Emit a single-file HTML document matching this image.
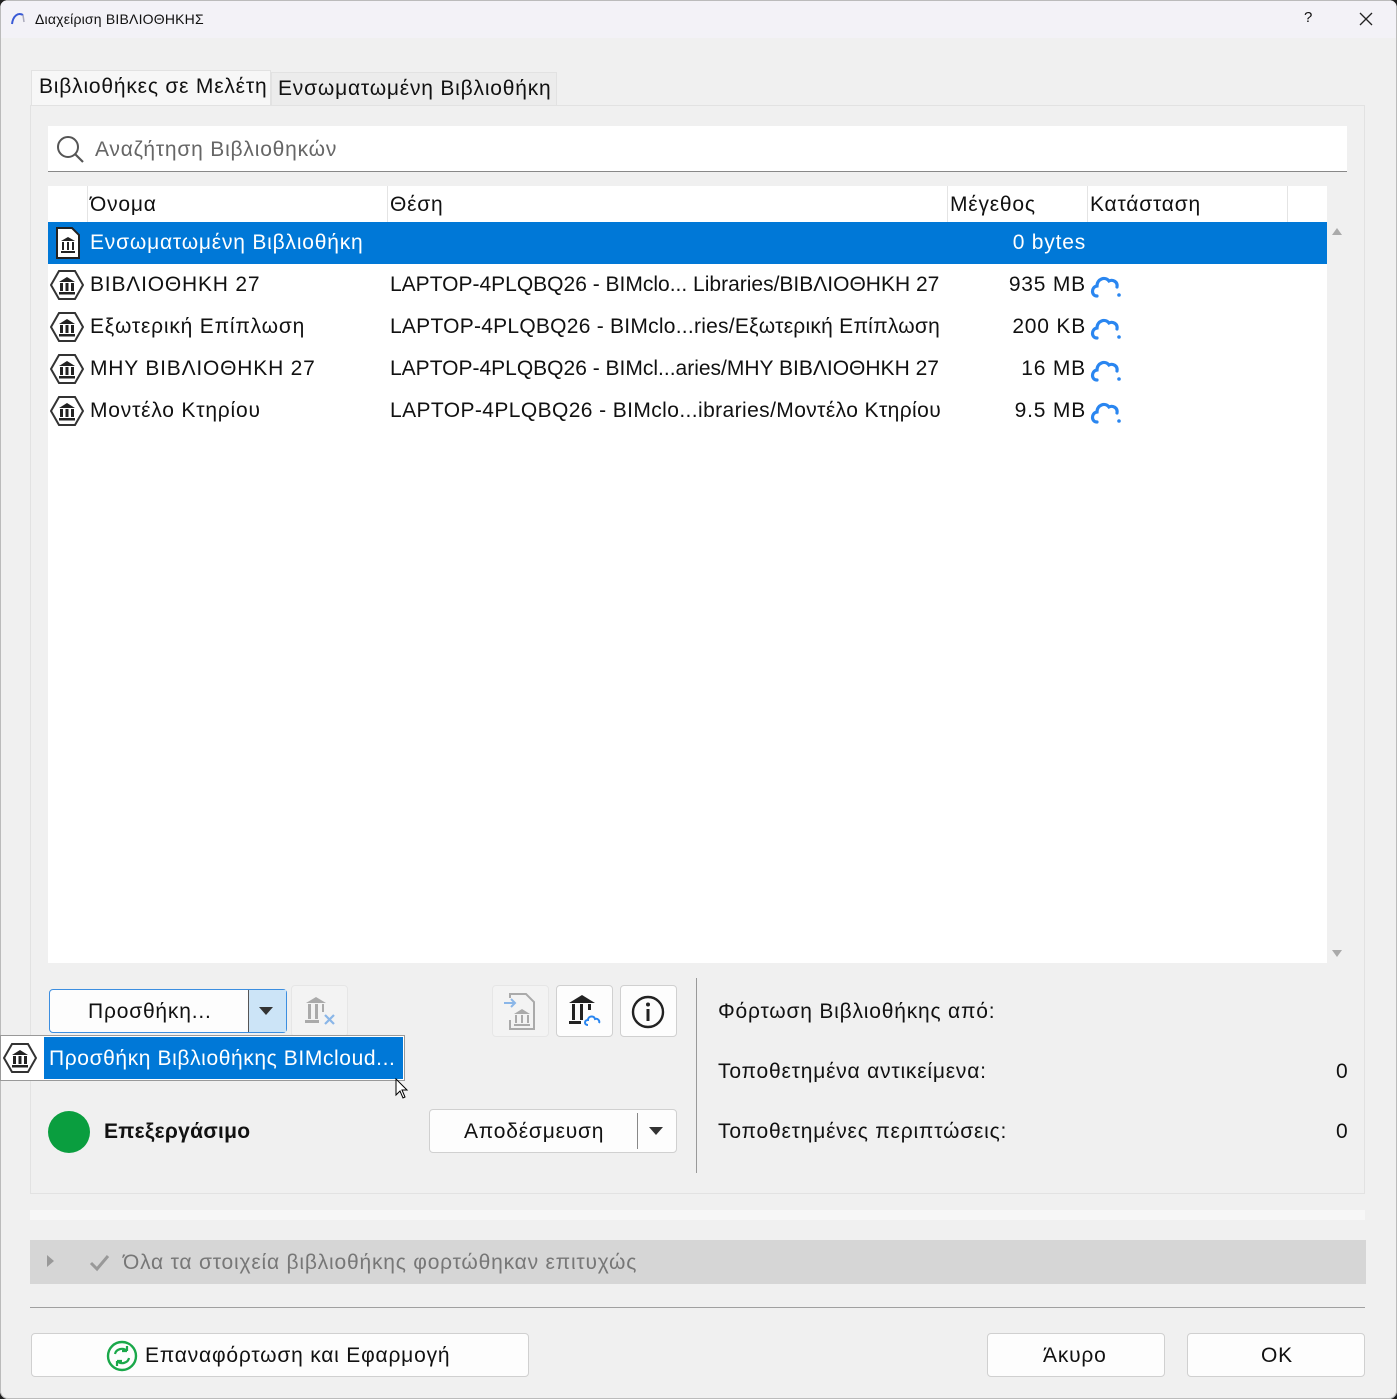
<!DOCTYPE html>
<html><head><meta charset="utf-8"><style>
*{margin:0;padding:0;box-sizing:border-box}
body{width:1397px;height:1399px;background:#202020;font-family:"Liberation Sans","DejaVu Sans",sans-serif;color:#111;position:relative;overflow:hidden}
.win{position:absolute;left:0;top:0;width:1397px;height:1399px;background:#f0f0f0;border-radius:8px;overflow:hidden;box-shadow:inset 0 0 0 1px #bbb}
.a{position:absolute;white-space:nowrap}
.t21{font-size:21px;letter-spacing:0.8px}
.btn{position:absolute;background:#fdfdfd;border:1px solid #d0d0d0;border-radius:4px}
.row{position:absolute;left:48px;width:1279px;height:42px;font-size:21px}
.row span{position:absolute;top:9px;letter-spacing:0.8px}
.row span.p{letter-spacing:0}
</style></head><body><div class="win">
<div class="a" style="left:1px;top:1px;width:1395px;height:37px;background:#f3f2f7"></div>
<svg class="a" style="left:10px;top:10px" width="16" height="16"><path d="M2 14 C3 6,8 2,13 5" stroke="#3a5bd6" stroke-width="2" fill="none"/><path d="M13 5 L14 12" stroke="#aab" stroke-width="1.5"/></svg>
<div class="a" style="left:35px;top:11px;font-size:14px;letter-spacing:0.2px">Διαχείριση ΒΙΒΛΙΟΘΗΚΗΣ</div>
<div class="a" style="left:1304px;top:9px;font-size:15px">?</div>
<svg class="a" style="left:1359px;top:12px" width="14" height="14"><path d="M1 1L13 13M13 1L1 13" stroke="#222" stroke-width="1.3"/></svg>
<div class="a" style="left:31px;top:70px;width:240px;height:36px;background:#f7f7f7;border:1px solid #e2e2e2;border-bottom:none"></div>
<div class="a t21" style="left:39px;top:75px">Βιβλιοθήκες σε Μελέτη</div>
<div class="a" style="left:271px;top:72px;width:286px;height:33px;background:#ececec;border:1px solid #e2e2e2;border-bottom:none"></div>
<div class="a t21" style="left:278px;top:77px">Ενσωματωμένη Βιβλιοθήκη</div>
<div class="a" style="left:30px;top:105px;width:1335px;height:1089px;border:1px solid #e2e2e2;background:#f0f0f0"></div>
<div class="a" style="left:48px;top:126px;width:1299px;height:46px;background:#fff;border-bottom:1px solid #888"></div>
<svg class="a" style="left:56px;top:135px" width="30" height="30"><circle cx="12" cy="12" r="10" stroke="#555" stroke-width="2" fill="none"/><path d="M19 19L27 27" stroke="#555" stroke-width="2.2"/></svg>
<div class="a t21" style="left:95px;top:138px;color:#666">Αναζήτηση Βιβλιοθηκών</div>
<div class="a" style="left:48px;top:186px;width:1279px;height:777px;background:#fff"></div>
<div class="a" style="left:1327px;top:186px;width:20px;height:777px;background:#f0f0f0"></div>
<div class="a" style="left:1332px;top:228px;border:5px solid transparent;border-bottom:7px solid #aaa;border-top:none;width:0"></div>
<div class="a" style="left:1332px;top:950px;border:5px solid transparent;border-top:7px solid #aaa;border-bottom:none;width:0"></div>
<div class="a" style="left:87px;top:186px;width:1px;height:36px;background:#e4e4e4"></div>
<div class="a" style="left:387px;top:186px;width:1px;height:36px;background:#e4e4e4"></div>
<div class="a" style="left:947px;top:186px;width:1px;height:36px;background:#e4e4e4"></div>
<div class="a" style="left:1087px;top:186px;width:1px;height:36px;background:#e4e4e4"></div>
<div class="a" style="left:1287px;top:186px;width:1px;height:36px;background:#e4e4e4"></div>
<div class="a t21" style="left:90px;top:193px">Όνομα</div>
<div class="a t21" style="left:390px;top:193px">Θέση</div>
<div class="a t21" style="left:950px;top:193px">Μέγεθος</div>
<div class="a t21" style="left:1090px;top:193px">Κατάσταση</div>

<div class="row" style="top:222px;background:#0078d7;color:#fff">
<svg class="a" style="left:7px;top:5px" width="26" height="32"><path d="M2 1H17L24 8V31H2Z" fill="#fff" stroke="#222" stroke-width="2"/><path d="M6 14L13 10L20 14ZM7 15h2v8H7zM12 15h2v8h-2zM17 15h2v8h-2zM6 24h14v2H6z" fill="#222"/></svg>
<span style="left:42px">Ενσωματωμένη Βιβλιοθήκη</span><span style="right:241px">0 bytes</span></div>

<svg width="0" height="0" style="position:absolute"><defs>
<symbol id="hx" viewBox="0 0 34 32"><path d="M9 2H25L33 16L25 30H9L1 16Z" fill="none" stroke="#333" stroke-width="2"/><path d="M9 13L17 8L25 13ZM10 14h3v8h-3zM15.5 14h3v8h-3zM21 14h3v8h-3zM9 23h16v2.5H9z" fill="#222"/></symbol>
<symbol id="cl" viewBox="0 0 34 28"><path d="M8 24C2 24 2 15 8 14C8 7 16 4 20 9C24 7 29 10 28 15" fill="none" stroke="#2a86f0" stroke-width="3.2" stroke-linecap="round"/><circle cx="30" cy="23" r="1.8" fill="#2a86f0"/></symbol>
</defs></svg>

<div class="row" style="top:264px"><svg class="a" style="left:2px;top:5px" width="34" height="32"><use href="#hx"/></svg><span style="left:42px">ΒΙΒΛΙΟΘΗΚΗ 27</span><span class="p" style="left:342px">LAPTOP-4PLQBQ26 - BIMclo... Libraries/ΒΙΒΛΙΟΘΗΚΗ 27</span><span style="right:241px">935 MB</span><svg class="a" style="left:1040px;top:8px" width="36" height="28"><use href="#cl"/></svg></div>
<div class="row" style="top:306px"><svg class="a" style="left:2px;top:5px" width="34" height="32"><use href="#hx"/></svg><span style="left:42px">Εξωτερική Επίπλωση</span><span class="p" style="left:342px;letter-spacing:0.25px">LAPTOP-4PLQBQ26 - BIMclo...ries/Εξωτερική Επίπλωση</span><span style="right:241px">200 KB</span><svg class="a" style="left:1040px;top:8px" width="36" height="28"><use href="#cl"/></svg></div>
<div class="row" style="top:348px"><svg class="a" style="left:2px;top:5px" width="34" height="32"><use href="#hx"/></svg><span style="left:42px">ΜΗΥ ΒΙΒΛΙΟΘΗΚΗ 27</span><span class="p" style="left:342px">LAPTOP-4PLQBQ26 - BIMcl...aries/ΜΗΥ ΒΙΒΛΙΟΘΗΚΗ 27</span><span style="right:241px">16 MB</span><svg class="a" style="left:1040px;top:8px" width="36" height="28"><use href="#cl"/></svg></div>
<div class="row" style="top:390px"><svg class="a" style="left:2px;top:5px" width="34" height="32"><use href="#hx"/></svg><span style="left:42px">Μοντέλο Κτηρίου</span><span class="p" style="left:342px;letter-spacing:0.4px">LAPTOP-4PLQBQ26 - BIMclo...ibraries/Μοντέλο Κτηρίου</span><span style="right:241px">9.5 MB</span><svg class="a" style="left:1040px;top:8px" width="36" height="28"><use href="#cl"/></svg></div>

<div class="btn" style="left:49px;top:989px;width:238px;height:44px;border-color:#3c8ee0"></div>
<div class="a" style="left:248px;top:990px;width:38px;height:42px;background:#cce4f7;border-left:1px solid #555"></div>
<div class="a" style="left:259px;top:1007px;border:7px solid transparent;border-top:8px solid #333;border-bottom:none;width:0"></div>
<div class="a t21" style="left:88px;top:1000px">Προσθήκη...</div>
<div class="btn" style="left:291px;top:985px;width:57px;height:52px;background:#f3f3f3;border-color:#e6e6e6"></div>
<svg class="a" style="left:302px;top:995px" width="36" height="34"><path d="M4 8L14 2L24 8ZM6 9h3v15H6zM13 9h3v15h-3zM20 9h2v8h-2zM3 25h14v3H3z" fill="#aaa"/><path d="M23 20l9 9M32 20l-9 9" stroke="#8ab6e8" stroke-width="2.2"/></svg>
<div class="btn" style="left:492px;top:985px;width:57px;height:52px;background:#f3f3f3;border-color:#e6e6e6"></div>
<svg class="a" style="left:502px;top:990px" width="36" height="42"><path d="M8 8V4H24L32 12V39H8V30" fill="none" stroke="#aaa" stroke-width="2"/><path d="M2 13H13M9 9L13 13L9 17" stroke="#8ab6e8" stroke-width="2" fill="none"/><path d="M12 24L20 19L28 24ZM13 25h2v8h-2zM19 25h2v8h-2zM25 25h2v8h-2zM12 34h16v2H12z" fill="#aaa"/></svg>
<div class="btn" style="left:556px;top:985px;width:57px;height:52px"></div>
<svg class="a" style="left:566px;top:993px" width="38" height="36"><path d="M3 10L16 2L29 10ZM6 11h3v16H6zM14 11h3v16h-3zM22 11h3v6h-3zM3 28h12v3H3z" fill="#222"/><path d="M22 32c-4 0-4-5 0-5c0-4 6-5 7-1c3-1 5 2 4 4" fill="none" stroke="#2a86f0" stroke-width="2"/></svg>
<div class="btn" style="left:620px;top:985px;width:57px;height:52px"></div>
<svg class="a" style="left:630px;top:994px" width="36" height="36"><circle cx="18" cy="18" r="15" stroke="#222" stroke-width="2.4" fill="none"/><circle cx="18" cy="10.5" r="2" fill="#222"/><path d="M18 15V27" stroke="#222" stroke-width="3"/></svg>
<div class="a" style="left:0;top:1035px;width:405px;height:46px;background:#fff;border:1px solid #999"></div>
<div class="a" style="left:44px;top:1037px;width:359px;height:42px;background:#0078d7"></div>
<svg class="a" style="left:3px;top:1042px" width="34" height="32"><use href="#hx"/></svg>
<div class="a t21" style="left:49px;top:1047px;color:#fff;letter-spacing:0.6px">Προσθήκη Βιβλιοθήκης BIMcloud...</div>
<svg class="a" style="left:395px;top:1078px" width="14" height="22"><path d="M1 1V17L5 13L8 20L10 19L7 12H12Z" fill="#fff" stroke="#000" stroke-width="1"/></svg>
<div class="a" style="left:48px;top:1111px;width:42px;height:42px;border-radius:50%;background:#0a9e3f"></div>
<div class="a t21" style="left:104px;top:1120px;font-weight:bold;letter-spacing:0.3px">Επεξεργάσιμο</div>
<div class="btn" style="left:429px;top:1109px;width:248px;height:44px"></div>
<div class="a" style="left:637px;top:1113px;width:1px;height:36px;background:#888"></div>
<div class="a t21" style="left:464px;top:1120px">Αποδέσμευση</div>
<div class="a" style="left:649px;top:1127px;border:7px solid transparent;border-top:8px solid #333;border-bottom:none;width:0"></div>
<div class="a" style="left:696px;top:978px;width:1px;height:195px;background:#999"></div>
<div class="a t21" style="left:718px;top:1000px">Φόρτωση Βιβλιοθήκης από:</div>
<div class="a t21" style="left:718px;top:1060px">Τοποθετημένα αντικείμενα:</div>
<div class="a t21" style="left:718px;top:1120px">Τοποθετημένες περιπτώσεις:</div>
<div class="a t21" style="left:1336px;top:1060px">0</div>
<div class="a t21" style="left:1336px;top:1120px">0</div>
<div class="a" style="left:30px;top:1210px;width:1335px;height:10px;background:#f7f7f7"></div>
<div class="a" style="left:30px;top:1240px;width:1336px;height:44px;background:#d6d6d6"></div>
<div class="a" style="left:47px;top:1255px;border:6px solid transparent;border-left:7px solid #999;border-right:none;width:0"></div>
<svg class="a" style="left:88px;top:1252px" width="24" height="22"><path d="M3 11L9 17L20 4" stroke="#999" stroke-width="3" fill="none"/></svg>
<div class="a t21" style="left:123px;top:1251px;color:#777">Όλα τα στοιχεία βιβλιοθήκης φορτώθηκαν επιτυχώς</div>
<div class="a" style="left:30px;top:1307px;width:1335px;height:1px;background:#a0a0a0"></div>
<div class="btn" style="left:31px;top:1333px;width:498px;height:44px"></div>
<svg class="a" style="left:106px;top:1340px" width="32" height="32"><circle cx="16" cy="16" r="14" stroke="#1aa84a" stroke-width="2.4" fill="none"/><path d="M9 14C10 9 17 7 21 11M21 11V6M21 11H16M23 18C22 23 15 25 11 21M11 21V26M11 21H16" stroke="#1aa84a" stroke-width="2.2" fill="none"/></svg>
<div class="a t21" style="left:145px;top:1344px">Επαναφόρτωση και Εφαρμογή</div>
<div class="btn" style="left:987px;top:1333px;width:178px;height:44px"></div>
<div class="a t21" style="left:1043px;top:1344px">Άκυρο</div>
<div class="btn" style="left:1187px;top:1333px;width:178px;height:44px"></div>
<div class="a t21" style="left:1261px;top:1344px">OK</div>
</div></body></html>
